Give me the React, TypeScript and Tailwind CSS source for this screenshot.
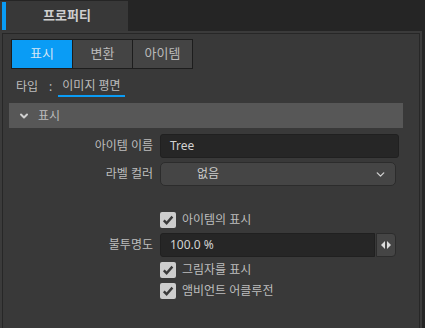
import { ChevronDown } from "lucide-react";

const font = { fontFamily: '"Noto Sans", "Noto Sans CJK KR", sans-serif' };

function CheckBox({ label }: { label: string }) {
    return (
        <div className="flex items-center gap-[6px]">
            <div className="w-[16px] h-[16px] rounded-[2px] bg-[#cdcdcd] flex items-center justify-center">
                <svg width="12" height="12" viewBox="0 0 12 12">
                    <path d="M1.8 6.4 L4.6 9.2 L10.4 2.6" fill="none" stroke="#3a3a3a" strokeWidth="2.4" />
                </svg>
            </div>
            <span className="text-[12px] text-[#bdbdbd]">{label}</span>
        </div>
    );
}

function Label({ children }: { children: string }) {
    return <div className="w-[150px] text-right text-[12px] text-[#bdbdbd]">{children}</div>;
}

export default function App() {
    return (
        <div className="w-[425px] h-[328px] bg-[#252525] flex flex-col overflow-hidden" style={font}>
            {/* top tab strip */}
            <div className="h-[31px] flex items-end">
                <div className="h-[30px] w-[128px] bg-[#383838] flex items-center pl-[2px]">
                    <div className="w-[4px] h-[28px] bg-[#0a9cf5]" />
                    <div className="flex-1 text-center text-[13px] font-bold text-[#cfcfcf]">프로퍼티</div>
                </div>
            </div>

            {/* panel */}
            <div className="flex-1 w-[422px] bg-[#3b3b3b] px-[2px] pt-[2px] flex">
                <div className="flex-1 bg-[#393939] border border-b-0 border-[#272727]">
                    {/* segmented */}
                    <div className="pt-[5px] pl-[8px]">
                        <div className="flex w-fit border border-[#1d1d1d] h-[30px]">
                            <div className="w-[60px] bg-[#0a9cf5] flex items-center justify-center text-[13px] text-[#d3e6f5]">표시</div>
                            <div className="w-[60px] bg-[#444444] border-l border-[#1d1d1d] flex items-center justify-center text-[13px] text-[#bababa]">변환</div>
                            <div className="w-[60px] bg-[#444444] border-l border-[#1d1d1d] flex items-center justify-center text-[13px] text-[#bababa]">아이템</div>
                        </div>
                    </div>

                    {/* type row */}
                    <div className="flex items-center h-[20px] mt-[8px] pl-[13px] text-[12px] text-[#bdbdbd]">
                        <span>타입</span>
                        <span className="ml-[11px]">:</span>
                        <span className="ml-[6px] px-[4px] border-b-2 border-[#0a9cf5] leading-[18px]">이미지 평면</span>
                    </div>

                    {/* section header */}
                    <div className="mt-[6px] ml-[6px] w-[394px] h-[25px] bg-[#575757] flex items-center">
                        <ChevronDown className="ml-[9px] w-[12px] h-[12px] text-[#d0d0d0]" strokeWidth={4} />
                        <span className="ml-[8px] text-[12px] text-[#bdbdbd]">표시</span>
                    </div>

                    {/* rows */}
                    <div className="mt-[6px] flex flex-col">
                        <div className="flex items-center gap-[7px]">
                            <Label>아이템 이름</Label>
                            <div className="w-[239px] h-[24px] rounded-[3px] bg-[#262626] border border-[#202020] flex items-center pl-[9px] text-[12px] text-[#d2d2d2]">Tree</div>
                        </div>
                        <div className="flex items-center gap-[7px] mt-[4px]">
                            <Label>라벨 컬러</Label>
                            <div className="w-[236px] h-[24px] rounded-[5px] bg-[#454545] border border-[#2c2c2c] flex items-center pl-[36px] pr-[8px] text-[12px] text-[#cdcdcd]">
                                <span className="flex-1">없음</span>
                                <ChevronDown className="w-[13px] h-[13px] text-[#cfcfcf]" strokeWidth={2.5} />
                            </div>
                        </div>
                        <div className="flex items-center mt-[26px] pl-[157px] h-[16px]">
                            <CheckBox label="아이템의 표시" />
                        </div>
                        <div className="flex items-center gap-[7px] mt-[5px]">
                            <Label>불투명도</Label>
                            <div className="flex gap-[1px]">
                                <div className="w-[215px] h-[24px] rounded-l-[3px] bg-[#262626] border border-[#202020] flex items-center pl-[9px] text-[12px] text-[#d2d2d2]">100.0 %</div>
                                <div className="w-[20px] h-[24px] rounded-r-[4px] bg-[#454545] border border-[#2c2c2c] flex items-center justify-center">
                                    <svg width="12" height="10" viewBox="0 0 12 10">
                                        <path d="M5 1 L1 5 L5 9 Z" fill="#dcdcdc" />
                                        <path d="M7 1 L11 5 L7 9 Z" fill="#dcdcdc" />
                                    </svg>
                                </div>
                            </div>
                        </div>
                        <div className="flex items-center mt-[5px] pl-[157px] h-[16px]">
                            <CheckBox label="그림자를 표시" />
                        </div>
                        <div className="flex items-center mt-[5px] pl-[157px] h-[16px]">
                            <CheckBox label="앰비언트 어클루전" />
                        </div>
                    </div>
                </div>
            </div>
        </div>
    );
}
